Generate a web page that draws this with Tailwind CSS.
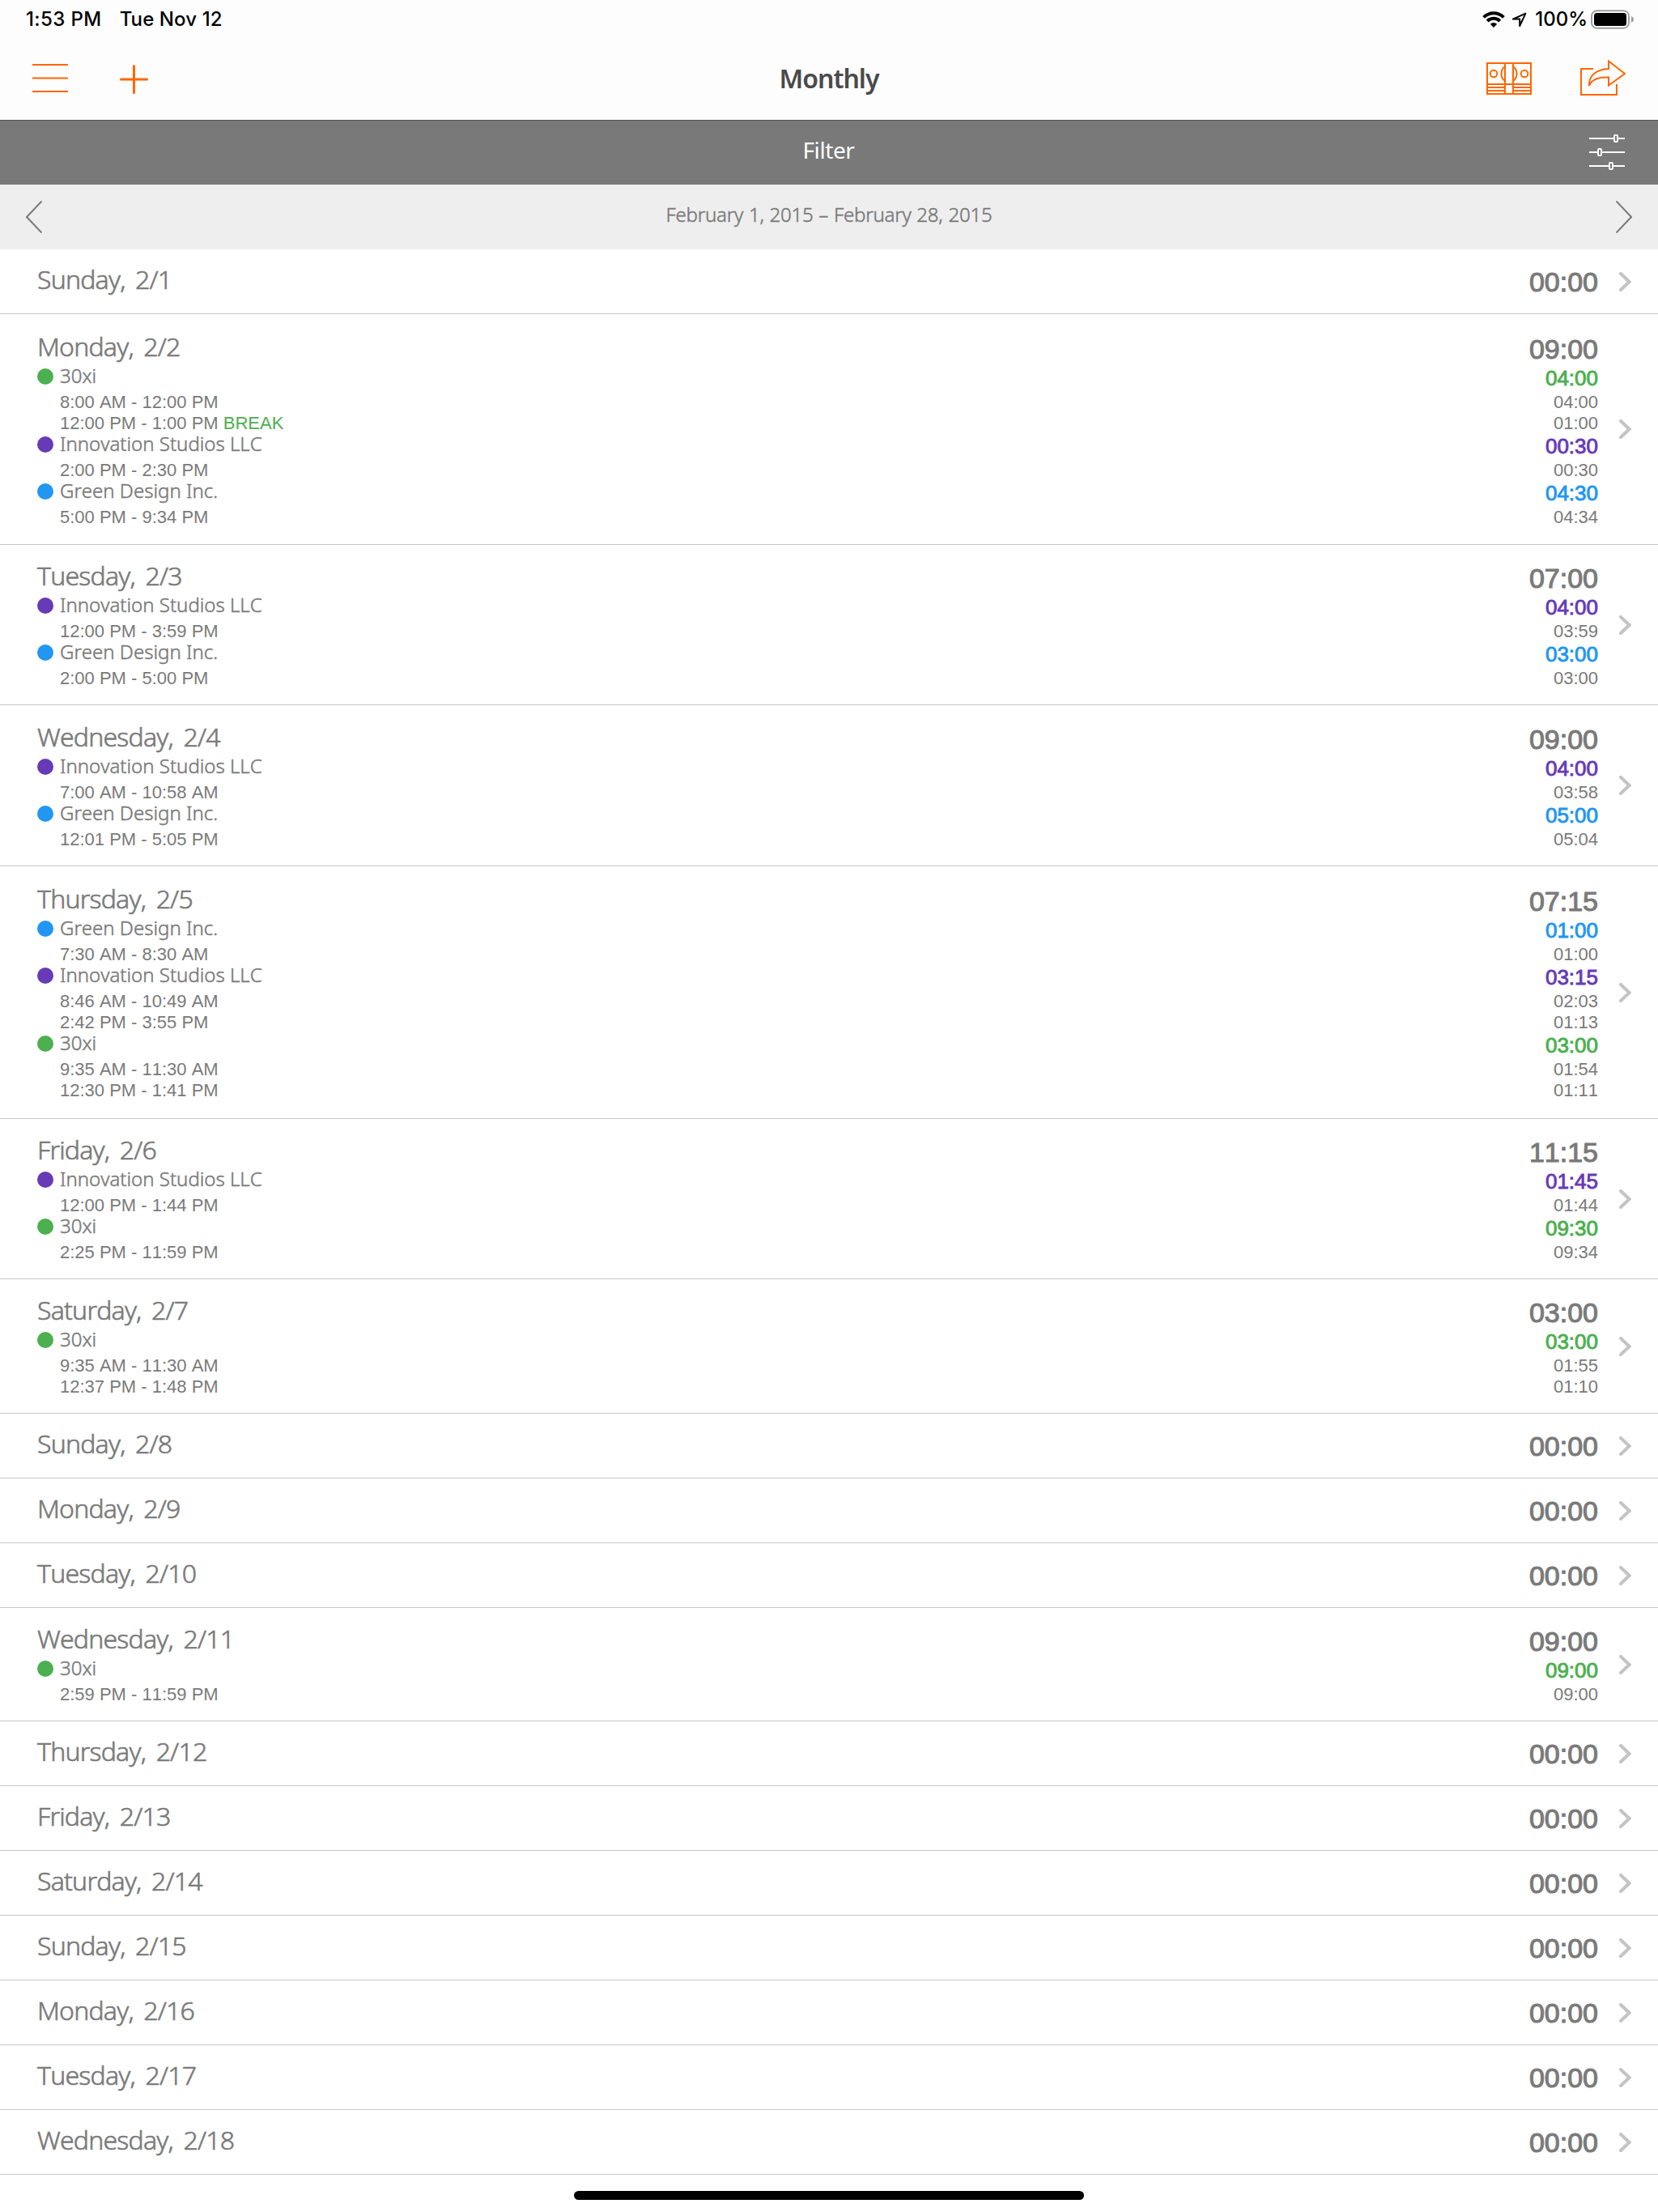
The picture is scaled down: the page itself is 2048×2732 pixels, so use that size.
<!DOCTYPE html>
<html lang="en">
  <head>
    <meta charset="UTF-8" />
    <meta name="viewport" content="width=device-width, initial-scale=1.0" />
    <title>Monthly</title>
    <script src="https://cdn.jsdelivr.net/npm/@tailwindcss/browser@4"></script>
  </head>
  <body
    class="w-[2048px] h-[2732px] overflow-hidden bg-white text-[#7a7a7a] font-['Noto_Sans',sans-serif]"
  >
    <header class="bg-[#fdfdfd] h-[148px]">
      <!-- status bar -->
      <div
        class="h-12 flex justify-between items-center pl-8 pr-[30px] text-black text-2xl font-medium font-['Inter',sans-serif]"
      >
        <div class="flex gap-[22px]">
          <span class="tracking-[0.4px]">1:53 PM</span>
          <span class="tracking-[0.1px]">Tue Nov 12</span>
        </div>
        <div class="flex items-center">
          <svg class="w-7 h-5 mr-2" viewBox="0 0 28 20">
            <g fill="none" stroke="#000" stroke-width="4">
              <path d="M1.6 7.4a17.6 17.6 0 0 1 24.8 0" />
              <path d="M6.2 12a11.2 11.2 0 0 1 15.6 0" />
            </g>
            <path d="M9.8 15.7a6 6 0 0 1 8.4 0L14 19.9z" />
          </svg>
          <svg class="w-[19px] h-[19px] mt-px mr-2.5" viewBox="0 0 19 19">
            <path
              d="M17.4 1.6L1.8 8.6h8.4v8.4z"
              fill="none"
              stroke="#000"
              stroke-width="2"
              stroke-linejoin="round"
            />
          </svg>
          <span class="mr-1">100%</span>
          <svg class="w-[53px] h-6" viewBox="0 0 53 24">
            <rect x="1" y="1.2" width="46" height="21.6" rx="6.5" fill="none" stroke="#a0a0a0" stroke-width="2" />
            <rect x="4" y="4" width="40" height="16" rx="3.5" />
            <path d="M50 8c4 1.6 4 6.4 0 8z" fill="#a0a0a0" />
          </svg>
        </div>
      </div>
      <!-- nav bar -->
      <div class="h-[100px] pb-0.5 pl-10 pr-10 grid grid-cols-3 items-center">
        <div class="flex items-center gap-16">
          <svg class="w-11 h-9 -mt-0.5" viewBox="0 0 44 36" stroke="#ff6600" stroke-width="2">
            <path d="M0 2h44M0 18.5h44M0 35h44" />
          </svg>
          <svg class="w-9 h-9 mt-0.5" viewBox="0 0 36 36" stroke="#ff6600" stroke-width="3" stroke-linecap="round">
            <path d="M1.5 18h32M17.5 1.5v33" />
          </svg>
        </div>
        <h1
          class="text-center text-[32px] leading-10 font-semibold tracking-[-1px] text-[#4a4a4a]"
        >
          Monthly
        </h1>
        <div class="flex items-center justify-end gap-[60px]">
          <svg class="w-14 h-10" viewBox="0 0 56 40" fill="none" stroke="#ff6600" stroke-width="2">
            <path d="M1 1h54v38H1zM23 1v38M33 1v38M1 27h54M1 31h22M1 35h22M33 31h22M33 35h22" />
            <circle cx="9" cy="14" r="4.3" />
            <circle cx="47" cy="14" r="4.3" />
            <path d="M23 5c-6 4-6 14 0 18M33 5c6 4 6 14 0 18" />
          </svg>
          <svg class="w-14 h-11 -mt-0.5" viewBox="0 0 56 44" fill="none" stroke="#ff6600" stroke-width="2">
            <path d="M16 11H1v32h44V30" />
            <path d="M35 1.5L55 17 35 31.5V21.5C23 21 14 24 11 32 10 19 21 11.5 35 11z" />
          </svg>
        </div>
      </div>
    </header>

    <div
      class="h-20 bg-[#797979] border-t border-[#555] grid grid-cols-3 items-center pl-10 pr-[41px]"
    >
      <span
        class="col-start-2 text-center text-[28px] leading-8 pb-[7px] text-white tracking-[-0.4px]"
        >Filter</span
      >
      <svg class="w-11 h-11 justify-self-end -mt-0.5" viewBox="0 0 44 44" fill="none" stroke="#fff" stroke-width="2">
        <path d="M0 5h30M36 5h8M0 22h10M16 22h28M0 39h24M30 39h14" />
        <rect x="31" y="1" width="4" height="8" rx="1" />
        <rect x="11" y="18" width="4" height="8" rx="1" />
        <rect x="25" y="35" width="4" height="8" rx="1" />
      </svg>
    </div>

    <div class="h-20 bg-[#eee] flex justify-between items-center px-8">
      <svg class="w-5 h-10" viewBox="0 0 20 40" fill="none" stroke="#7a7a7a" stroke-width="2">
        <path d="M19.5 .5L1 20l18.5 19.5" />
      </svg>
      <span
        class="text-2xl font-light pb-[7px] tracking-[-0.2px] [word-spacing:0.8px] [-webkit-text-stroke:0.5px]"
        >February 1, 2015 – February 28, 2015</span
      >
      <svg class="w-5 h-10" viewBox="0 0 20 40" fill="none" stroke="#7a7a7a" stroke-width="2">
        <path d="M.5 .5L19 20 .5 39.5" />
      </svg>
    </div>

    <main id="days"></main>

    <div class="w-[630px] h-[11px] mt-5 mx-auto rounded-full bg-black"></div>

    <script>
      const clients = {
        xi: { name: "30xi", dot: "bg-[#4caf50]", text: "text-[#4caf50]" },
        studios: {
          name: "Innovation Studios LLC",
          dot: "bg-[#673ab7]",
          text: "text-[#673ab7]",
        },
        green: {
          name: "Green Design Inc.",
          dot: "bg-[#2196f3]",
          text: "text-[#2196f3]",
        },
      };
      // [label, total, row height, [[client, rounded total, [[range, duration, break?]]]]]
      const days = [
        ["Sunday, 2/1", "00:00", "h-20", []],
        ["Monday, 2/2", "09:00", "h-[285px]", [
          ["xi", "04:00", [
            ["8:00 AM - 12:00 PM", "04:00"],
            ["12:00 PM - 1:00 PM", "01:00", true],
          ]],
          ["studios", "00:30", [["2:00 PM - 2:30 PM", "00:30"]]],
          ["green", "04:30", [["5:00 PM - 9:34 PM", "04:34"]]],
        ]],
        ["Tuesday, 2/3", "07:00", "h-[198px]", [
          ["studios", "04:00", [["12:00 PM - 3:59 PM", "03:59"]]],
          ["green", "03:00", [["2:00 PM - 5:00 PM", "03:00"]]],
        ]],
        ["Wednesday, 2/4", "09:00", "h-[199px]", [
          ["studios", "04:00", [["7:00 AM - 10:58 AM", "03:58"]]],
          ["green", "05:00", [["12:01 PM - 5:05 PM", "05:04"]]],
        ]],
        ["Thursday, 2/5", "07:15", "h-[312px]", [
          ["green", "01:00", [["7:30 AM - 8:30 AM", "01:00"]]],
          ["studios", "03:15", [
            ["8:46 AM - 10:49 AM", "02:03"],
            ["2:42 PM - 3:55 PM", "01:13"],
          ]],
          ["xi", "03:00", [
            ["9:35 AM - 11:30 AM", "01:54"],
            ["12:30 PM - 1:41 PM", "01:11"],
          ]],
        ]],
        ["Friday, 2/6", "11:15", "h-[198px]", [
          ["studios", "01:45", [["12:00 PM - 1:44 PM", "01:44"]]],
          ["xi", "09:30", [["2:25 PM - 11:59 PM", "09:34"]]],
        ]],
        ["Saturday, 2/7", "03:00", "h-[166px]", [
          ["xi", "03:00", [
            ["9:35 AM - 11:30 AM", "01:55"],
            ["12:37 PM - 1:48 PM", "01:10"],
          ]],
        ]],
        ["Sunday, 2/8", "00:00", "h-20", []],
        ["Monday, 2/9", "00:00", "h-20", []],
        ["Tuesday, 2/10", "00:00", "h-20", []],
        ["Wednesday, 2/11", "09:00", "h-[140px]", [
          ["xi", "09:00", [["2:59 PM - 11:59 PM", "09:00"]]],
        ]],
        ["Thursday, 2/12", "00:00", "h-20", []],
        ["Friday, 2/13", "00:00", "h-20", []],
        ["Saturday, 2/14", "00:00", "h-20", []],
        ["Sunday, 2/15", "00:00", "h-20", []],
        ["Monday, 2/16", "00:00", "h-20", []],
        ["Tuesday, 2/17", "00:00", "h-20", []],
        ["Wednesday, 2/18", "00:00", "h-20", []],
      ];

      const entryRow = ([range, duration, isBreak], client) => `
        <div class="h-[26px] flex justify-between pl-7 text-[22px] leading-[26px] font-['Liberation_Sans',sans-serif]">
          <span>${range}${isBreak ? ` <span class="${client.text}">BREAK</span>` : ""}</span>
          <span>${duration}</span>
        </div>`;

      const clientRows = ([key, total, entries]) => `
        <div class="h-8 flex justify-between items-start">
          <div class="h-6 flex items-center gap-2">
            <span class="size-5 mt-0.5 rounded-full ${clients[key].dot}"></span>
            <span class="text-2xl leading-6 font-light [-webkit-text-stroke:0.5px]">${clients[key].name}</span>
          </div>
          <span class="text-[26px] leading-[30px] font-['Liberation_Sans',sans-serif] [-webkit-text-stroke:0.9px] ${clients[key].text}">${total}</span>
        </div>
        ${entries.map((entry) => entryRow(entry, clients[key])).join("")}`;

      document.getElementById("days").innerHTML = days
        .map(
          ([label, total, height, groups]) => `
        <section class="${height} flex items-center border-b border-[#c8c7cc] pl-[46px] pr-[33px]">
          <div class="grow pt-[3px] [font-kerning:none]">
            <div class="h-10 flex justify-between items-start">
              <h2 class="text-[32px] leading-8 font-light tracking-[-0.8px] [word-spacing:5px] [-webkit-text-stroke:0.6px]">${label}</h2>
              <span class="text-[34px] leading-[38px] font-['Liberation_Sans',sans-serif] [-webkit-text-stroke:1.1px]">${total}</span>
            </div>
            ${groups.map(clientRows).join("")}
          </div>
          <svg class="w-[15px] h-6 ml-[26px]" viewBox="0 0 15 24" fill="none" stroke="#c4c4c6" stroke-width="4" stroke-linecap="round">
            <path d="M2 2l10.500 10L2 22" />
          </svg>
        </section>`
        )
        .join("");
    </script>
  </body>
</html>
